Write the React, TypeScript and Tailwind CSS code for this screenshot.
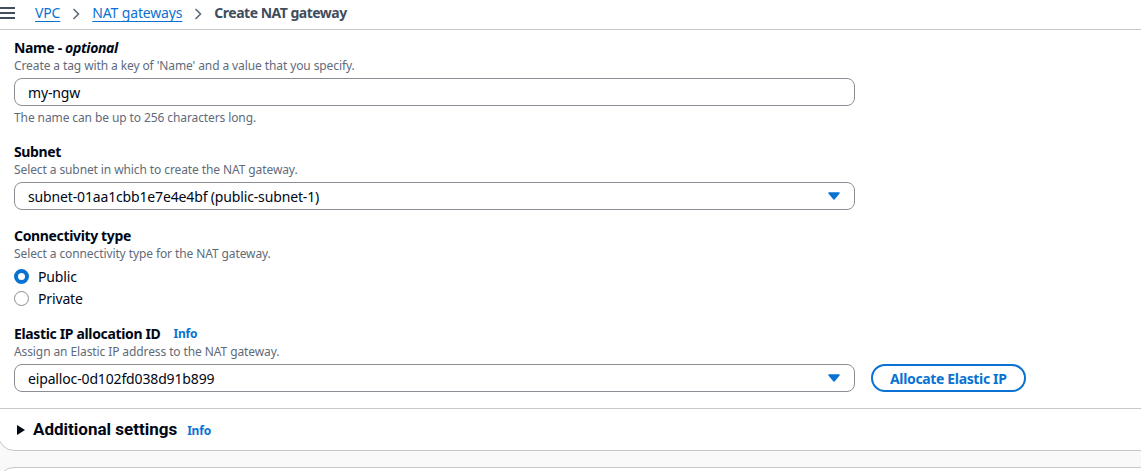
import React from "react";

const font = { fontFamily: '"Noto Sans", "Open Sans", Arial, sans-serif' };

function Caret() {
  return (
    <svg width="12" height="8" viewBox="0 0 12 8" className="shrink-0">
      <path d="M1 1h10L6 7z" fill="#0972d3" stroke="#0972d3" strokeWidth="1.5" strokeLinejoin="round" />
    </svg>
  );
}

function Chevron() {
  return (
    <svg width="10" height="14" viewBox="0 0 10 14" className="mx-[11px]">
      <path d="M2.5 2l5 5-5 5" fill="none" stroke="#5f6b7a" strokeWidth="1.6" />
    </svg>
  );
}

function Label({ children, info }: { children: React.ReactNode; info?: boolean }) {
  return (
    <div className="flex items-center h-[20px] text-[14px] font-bold text-[#000716] leading-[20px] tracking-[-0.35px]">
      <span>{children}</span>
      {info && <span className="ml-[13px] text-[12px] font-bold text-[#0972d3] tracking-[-0.2px]">Info</span>}
    </div>
  );
}

function Desc({ children }: { children: React.ReactNode }) {
  return <div className="h-[16px] text-[12px] leading-[16px] text-[#5f6b7a] tracking-[-0.1px]">{children}</div>;
}

function SelectBox({ value }: { value: string }) {
  return (
    <div className="w-[841px] h-[28px] border border-[#8c8c94] rounded-[8px] flex items-center justify-between pl-[13px] pr-[14px] text-[14px] text-[#000716] tracking-[-0.15px]">
      <span>{value}</span>
      <Caret />
    </div>
  );
}

export default function App() {
  return (
    <div className="w-[1141px] h-[471px] overflow-hidden bg-[#f9f9fa]" style={font}>
      <header className="h-[29px] bg-white flex items-center pb-[1px]">
        <svg width="16" height="14" viewBox="0 0 16 14" className="ml-0 mr-[19px] -mt-[2px]">
          <path d="M0 2h15M0 7h15M0 12h15" stroke="#414d5c" strokeWidth="2" />
        </svg>
        <a className="text-[14px] text-[#0972d3] underline underline-offset-[3px] -mt-[3px] tracking-[-0.15px]">VPC</a>
        <Chevron />
        <a className="text-[14px] text-[#0972d3] underline underline-offset-[3px] -mt-[3px] tracking-[-0.15px]">NAT gateways</a>
        <Chevron />
        <span className="text-[14px] font-bold text-[#414d5c] -mt-[3px] tracking-[-0.5px]">Create NAT gateway</span>
      </header>
      <div className="w-[1160px] -ml-[2px] bg-white border border-[#c6c6cd] rounded-bl-[16px] rounded-br-[16px]">
        <div className="pl-[15px] pt-[8px] pb-[16px]">
          <Label>
            Name - <i>optional</i>
          </Label>
          <Desc>Create a tag with a key of 'Name' and a value that you specify.</Desc>
          <div className="mt-[4px] w-[841px] h-[28px] border border-[#8c8c94] rounded-[8px] flex items-center pl-[13px] text-[14px] text-[#000716] tracking-[-0.15px]">
            my-ngw
          </div>
          <div className="mt-[4px]">
            <Desc>The name can be up to 256 characters long.</Desc>
          </div>

          <div className="mt-[16px]">
            <Label>Subnet</Label>
            <Desc>Select a subnet in which to create the NAT gateway.</Desc>
            <div className="mt-[4px]">
              <SelectBox value="subnet-01aa1cbb1e7e4e4bf (public-subnet-1)" />
            </div>
          </div>

          <div className="mt-[16px]">
            <Label>Connectivity type</Label>
            <Desc>Select a connectivity type for the NAT gateway.</Desc>
            <div className="mt-[3px] flex flex-col">
              <div className="h-[22px] flex items-center text-[14px] text-[#000716] tracking-[-0.15px]">
                <span className="w-[15px] h-[15px] rounded-full border-[4px] border-[#0972d3] bg-white mr-[9px]" />
                Public
              </div>
              <div className="h-[22px] flex items-center text-[14px] text-[#000716] tracking-[-0.15px]">
                <span className="w-[15px] h-[15px] rounded-full border-[1.5px] border-[#8c8c94] bg-white mr-[9px]" />
                Private
              </div>
            </div>
          </div>

          <div className="mt-[15px]">
            <Label info>Elastic IP allocation ID</Label>
            <Desc>Assign an Elastic IP address to the NAT gateway.</Desc>
            <div className="mt-[4px] flex items-center gap-[16px]">
              <SelectBox value="eipalloc-0d102fd038d91b899" />
              <button className="h-[28px] px-[17px] rounded-full border-2 border-[#0972d3] text-[14px] font-bold text-[#0972d3] bg-white tracking-[-0.35px]">
                Allocate Elastic IP
              </button>
            </div>
          </div>
        </div>
        <div className="border-t border-[#c6c6cd] h-[42px] flex items-center pl-[17px]">
          <svg width="10" height="12" viewBox="0 0 10 12" className="mr-[7px]">
            <path d="M1 1L9 6L1 11z" fill="#000716" />
          </svg>
          <span className="text-[17px] font-bold text-[#000716] mt-[1px]" style={{ fontFamily: 'Roboto, "Noto Sans", sans-serif' }}>Additional settings</span>
          <span className="ml-[10px] text-[12px] font-bold text-[#0972d3] mt-[3px] tracking-[-0.2px]">Info</span>
        </div>
      </div>
      <div className="mt-[16px] w-[1160px] -ml-[2px] h-[40px] bg-white border border-[#c6c6cd] rounded-t-[16px]" />
    </div>
  );
}
